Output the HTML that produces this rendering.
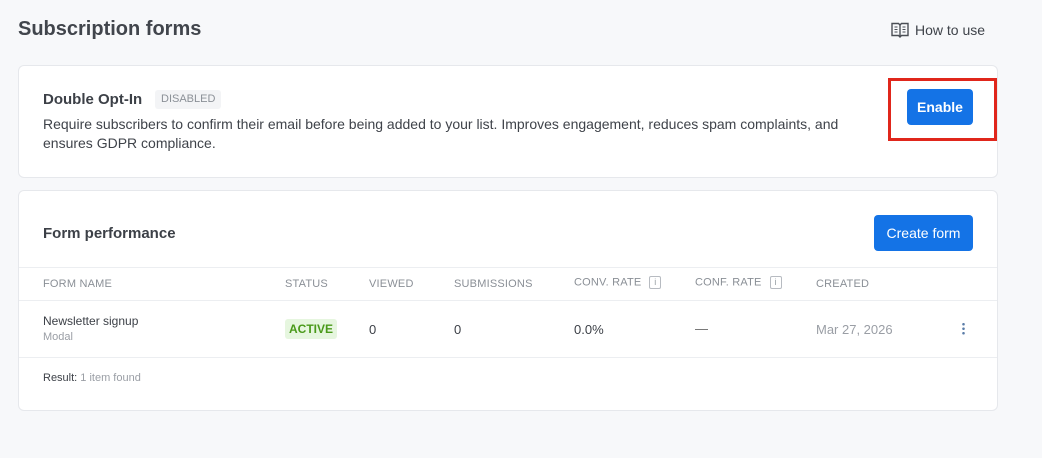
<!DOCTYPE html>
<html><head><style>
*{box-sizing:border-box;margin:0;padding:0}
body{width:1042px;height:458px;background:#f7f8fa;font-family:"Liberation Sans",sans-serif;color:#3c4047;position:relative;overflow:hidden}
.abs{position:absolute}
h1{position:absolute;left:18px;top:18px;font-size:20px;font-weight:bold;color:#41454c}
.how{left:891px;top:22px;font-size:14px;color:#3f434a;display:flex;align-items:center;gap:6px}
.card{position:absolute;left:18px;width:980px;background:#fff;border:1px solid #e6e8ec;border-radius:6px}
.btn{position:absolute;background:#1473e6;color:#fff;font-size:14px;font-weight:bold;border-radius:4px;display:flex;align-items:center;justify-content:center}
.th{position:absolute;top:278px;font-size:11px;color:#8a8f96;letter-spacing:0.2px}
.td{position:absolute;font-size:13px;color:#3c4047}
.info{display:inline-block;width:12px;height:13px;border:1px solid #b7bbc1;border-radius:2px;font-size:9px;text-align:center;line-height:11px;color:#9aa0a6;vertical-align:middle;margin-left:8px}
</style></head><body>
<h1>Subscription forms</h1>
<div class="abs how"><svg width="18" height="16" viewBox="0 0 18 16" fill="none" stroke="#4a4e55" stroke-width="1.4"><path d="M1 1.5h6.5l1.5 1.5 1.5-1.5H17v12h-6.5L9 15l-1.5-1.5H1z"/><path d="M9 3v11"/><path d="M3.5 5h3M3.5 7.5h3M3.5 10h3M11.5 5h3M11.5 7.5h3M11.5 10h3" stroke-width="1.1"/></svg><span>How to use</span></div>

<div class="card" style="top:65px;height:113px"></div>
<div class="abs" style="left:43px;top:91px;font-size:15px;font-weight:bold;color:#3c4047">Double Opt-In</div>
<div class="abs" style="left:155px;top:90px;height:19px;padding:0 6px;background:#f3f4f6;border-radius:3px;font-size:11px;color:#8b9097;line-height:19px">DISABLED</div>
<div class="abs" style="left:43px;top:115px;font-size:14px;line-height:19px;color:#3f434a;width:820px">Require subscribers to confirm their email before being added to your list. Improves engagement, reduces spam complaints, and ensures GDPR compliance.</div>
<div class="abs" style="left:888px;top:78px;width:109px;height:63px;border:3px solid #e0261b"></div>
<div class="btn" style="left:907px;top:89px;width:66px;height:36px">Enable</div>

<div class="card" style="top:190px;height:221px"></div>
<div class="abs" style="left:43px;top:225px;font-size:15px;font-weight:bold;color:#3c4047">Form performance</div>
<div class="btn" style="left:874px;top:215px;width:99px;height:36px;font-weight:normal">Create form</div>
<div class="abs" style="left:19px;top:267px;width:978px;border-top:1px solid #eceef1"></div>
<div class="abs" style="left:19px;top:300px;width:978px;border-top:1px solid #eceef1"></div>
<div class="abs" style="left:19px;top:357px;width:978px;border-top:1px solid #eceef1"></div>
<div class="th" style="left:43px">FORM NAME</div>
<div class="th" style="left:285px">STATUS</div>
<div class="th" style="left:369px">VIEWED</div>
<div class="th" style="left:454px">SUBMISSIONS</div>
<div class="th" style="left:574px;top:276px">CONV. RATE<span class="info">i</span></div>
<div class="th" style="left:695px;top:276px">CONF. RATE<span class="info">i</span></div>
<div class="th" style="left:816px">CREATED</div>
<div class="td" style="left:43px;top:314px;font-size:12px">Newsletter signup</div>
<div class="td" style="left:43px;top:331px;font-size:11px;color:#9a9ea5">Modal</div>
<div class="abs" style="left:285px;top:319px;width:52px;height:20px;background:#e6f6df;border-radius:3px;color:#4a9a1a;font-size:12px;font-weight:bold;text-align:center;line-height:20px">ACTIVE</div>
<div class="td" style="left:369px;top:322px">0</div>
<div class="td" style="left:454px;top:322px">0</div>
<div class="td" style="left:574px;top:322px">0.0%</div>
<div class="td" style="left:695px;top:321px;color:#666">—</div>
<div class="td" style="left:816px;top:322px;color:#9a9ea5">Mar 27, 2026</div>
<div class="abs" style="left:962px;top:322px;width:3px;height:13px;background:radial-gradient(circle,#5b7da8 1.2px,transparent 1.4px) 0 0/3px 4.5px"></div>
<div class="td" style="left:43px;top:372px;font-size:11px;color:#3c4047">Result: <span style="color:#9a9ea5">1 item found</span></div>
</body></html>
